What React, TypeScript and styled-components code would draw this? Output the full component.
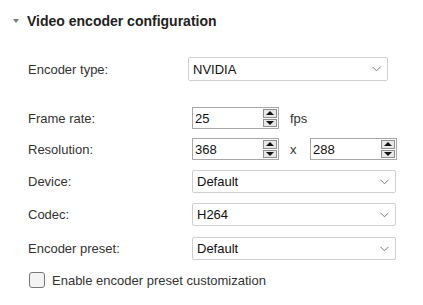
import React from "react";
import styled, { createGlobalStyle } from "styled-components";

const Global = createGlobalStyle`
  html, body { margin: 0; padding: 0; background: #fff; }
  body { font-family: "Liberation Sans", Arial, sans-serif; color: #333; }
`;

const Page = styled.div`
  width: 423px;
  height: 305px;
  overflow: hidden;
  position: relative;
`;

const Header = styled.div`
  display: flex;
  align-items: center;
  height: 41px;
  padding-left: 13px;
  gap: 8px;
`;

const Caret = styled.span`
  width: 0;
  height: 0;
  border-left: 3px solid transparent;
  border-right: 3px solid transparent;
  border-top: 4px solid #777;
`;

const Title = styled.span`
  font-weight: bold;
  font-size: 14px;
  color: #222;
`;

const Body = styled.div`
  padding-left: 28px;
  display: flex;
  flex-direction: column;
`;

const Row = styled.div<{ $top: number; $h: number }>`
  display: flex;
  align-items: center;
  margin-top: ${(p) => p.$top}px;
  height: ${(p) => p.$h}px;
`;

const Label = styled.div<{ $w?: number }>`
  width: ${(p) => p.$w ?? 164}px;
  font-size: 13px;
  color: #333;
`;

const Select = styled.div<{ $w: number }>`
  box-sizing: border-box;
  width: ${(p) => p.$w}px;
  height: 100%;
  border: 1px solid #cfcfcf;
  border-radius: 2px;
  display: flex;
  align-items: center;
  justify-content: space-between;
  padding: 0 6px 0 4px;
  font-size: 13px;
  color: #111;
  background: #fff;
`;

const Chevron = () => (
  <svg width="9" height="6" viewBox="0 0 9 6">
    <path d="M0.5 0.8 L4.5 4.8 L8.5 0.8" fill="none" stroke="#777" strokeWidth="1" />
  </svg>
);

const Spin = styled.div`
  box-sizing: border-box;
  width: 87px;
  height: 100%;
  border: 1px solid #a8a8a8;
  display: flex;
  align-items: stretch;
  padding: 1px;
  font-size: 13px;
  color: #111;
`;

const SpinValue = styled.div`
  flex: 1;
  display: flex;
  align-items: center;
  padding-left: 1px;
`;

const SpinButtons = styled.div`
  width: 14px;
  display: flex;
  flex-direction: column;
  gap: 1px;
`;

const SpinBtn = styled.div<{ $up?: boolean }>`
  flex: 1;
  box-sizing: border-box;
  border: 1px solid #8f8f8f;
  background: #e8e8e8;
  display: flex;
  align-items: center;
  justify-content: center;
  &::after {
    content: "";
    width: 0;
    height: 0;
    border-left: 4px solid transparent;
    border-right: 4px solid transparent;
    ${(p) => (p.$up ? "border-bottom: 4px solid #111;" : "border-top: 4px solid #111;")}
  }
`;

const Unit = styled.span<{ $w?: number }>`
  box-sizing: border-box;
  font-size: 13px;
  color: #333;
  padding-left: 11px;
  width: ${(p) => (p.$w ? `${p.$w}px` : "auto")};
`;

const CheckRow = styled.label`
  display: flex;
  align-items: center;
  gap: 7px;
  margin-top: 12px;
  padding-left: 1px;
  font-size: 13px;
  color: #333;
`;

const CheckBox = styled.span`
  box-sizing: border-box;
  width: 16px;
  height: 16px;
  border: 1px solid #777;
  border-radius: 3px;
  background: #f3f3f3;
`;

const SpinBox = ({ value }: { value: string }) => (
  <Spin>
    <SpinValue>{value}</SpinValue>
    <SpinButtons>
      <SpinBtn $up />
      <SpinBtn />
    </SpinButtons>
  </Spin>
);

export default function App() {
  return (
    <Page>
      <Global />
      <Header>
        <Caret />
        <Title>Video encoder configuration</Title>
      </Header>
      <Body>
        <Row $top={16} $h={24}>
          <Label $w={160}>Encoder type:</Label>
          <Select $w={200}>
            <span>NVIDIA</span>
            <Chevron />
          </Select>
        </Row>
        <Row $top={26} $h={22}>
          <Label>Frame rate:</Label>
          <SpinBox value="25" />
          <Unit>fps</Unit>
        </Row>
        <Row $top={9} $h={22}>
          <Label>Resolution:</Label>
          <SpinBox value="368" />
          <Unit $w={31}>x</Unit>
          <SpinBox value="288" />
        </Row>
        <Row $top={10} $h={23}>
          <Label>Device:</Label>
          <Select $w={204}>
            <span>Default</span>
            <Chevron />
          </Select>
        </Row>
        <Row $top={10} $h={23}>
          <Label>Codec:</Label>
          <Select $w={204}>
            <span>H264</span>
            <Chevron />
          </Select>
        </Row>
        <Row $top={11} $h={23}>
          <Label>Encoder preset:</Label>
          <Select $w={204}>
            <span>Default</span>
            <Chevron />
          </Select>
        </Row>
        <CheckRow>
          <CheckBox />
          <span>Enable encoder preset customization</span>
        </CheckRow>
      </Body>
    </Page>
  );
}
